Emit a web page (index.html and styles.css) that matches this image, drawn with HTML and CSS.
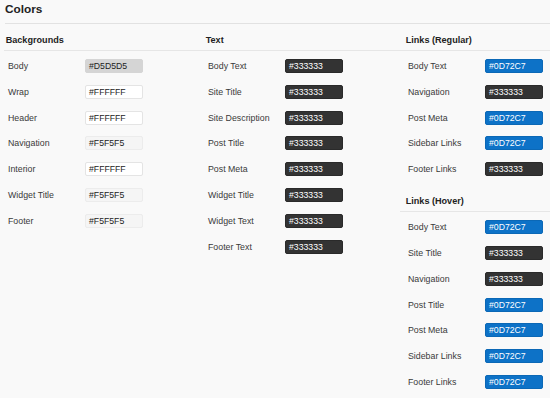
FILE: index.html
```html
<!DOCTYPE html>
<html>
<head>
<meta charset="utf-8">
<link rel="stylesheet" href="styles.css">
</head>
<body>
<div class="page">
  <h1 class="title">Colors</h1>
  <div class="columns">
    <div class="col">
      <h2 class="sec">Backgrounds</h2>
      <div class="rows">
        <div class="row"><span class="label">Body</span><span class="sw sw-d5">#D5D5D5</span></div>
        <div class="row"><span class="label">Wrap</span><span class="sw sw-ff">#FFFFFF</span></div>
        <div class="row"><span class="label">Header</span><span class="sw sw-ff">#FFFFFF</span></div>
        <div class="row"><span class="label">Navigation</span><span class="sw sw-f5">#F5F5F5</span></div>
        <div class="row"><span class="label">Interior</span><span class="sw sw-ff">#FFFFFF</span></div>
        <div class="row"><span class="label">Widget Title</span><span class="sw sw-f5">#F5F5F5</span></div>
        <div class="row"><span class="label">Footer</span><span class="sw sw-f5">#F5F5F5</span></div>
      </div>
    </div>
    <div class="col">
      <h2 class="sec">Text</h2>
      <div class="rows">
        <div class="row"><span class="label">Body Text</span><span class="sw sw-dark">#333333</span></div>
        <div class="row"><span class="label">Site Title</span><span class="sw sw-dark">#333333</span></div>
        <div class="row"><span class="label">Site Description</span><span class="sw sw-dark">#333333</span></div>
        <div class="row"><span class="label">Post Title</span><span class="sw sw-dark">#333333</span></div>
        <div class="row"><span class="label">Post Meta</span><span class="sw sw-dark">#333333</span></div>
        <div class="row"><span class="label">Widget Title</span><span class="sw sw-dark">#333333</span></div>
        <div class="row"><span class="label">Widget Text</span><span class="sw sw-dark">#333333</span></div>
        <div class="row"><span class="label">Footer Text</span><span class="sw sw-dark">#333333</span></div>
      </div>
    </div>
    <div class="col col-last">
      <h2 class="sec">Links (Regular)</h2>
      <div class="rows">
        <div class="row"><span class="label">Body Text</span><span class="sw sw-blue">#0D72C7</span></div>
        <div class="row"><span class="label">Navigation</span><span class="sw sw-dark">#333333</span></div>
        <div class="row"><span class="label">Post Meta</span><span class="sw sw-blue">#0D72C7</span></div>
        <div class="row"><span class="label">Sidebar Links</span><span class="sw sw-blue">#0D72C7</span></div>
        <div class="row"><span class="label">Footer Links</span><span class="sw sw-dark">#333333</span></div>
      </div>
      <h2 class="sec sec-next">Links (Hover)</h2>
      <div class="rows">
        <div class="row"><span class="label">Body Text</span><span class="sw sw-blue">#0D72C7</span></div>
        <div class="row"><span class="label">Site Title</span><span class="sw sw-dark">#333333</span></div>
        <div class="row"><span class="label">Navigation</span><span class="sw sw-dark">#333333</span></div>
        <div class="row"><span class="label">Post Title</span><span class="sw sw-blue">#0D72C7</span></div>
        <div class="row"><span class="label">Post Meta</span><span class="sw sw-blue">#0D72C7</span></div>
        <div class="row"><span class="label">Sidebar Links</span><span class="sw sw-blue">#0D72C7</span></div>
        <div class="row"><span class="label">Footer Links</span><span class="sw sw-blue">#0D72C7</span></div>
      </div>
    </div>
  </div>
</div>
</body>
</html>
```

FILE: styles.css
```css
html, body {
  margin: 0;
  padding: 0;
  background: #f9f9f9;
}
body {
  font-family: "Liberation Sans", Arial, Helvetica, sans-serif;
  color: #333;
}
.page {
  width: 550px;
}
.title {
  margin: 0 0 0 5px;
  font-size: 11.8px;
  font-weight: bold;
  line-height: 18px;
  padding-bottom: 5px;
  color: #222;
  border-bottom: 1px solid #e2e2e2;
}
.columns {
  display: flex;
}
.col {
  width: 200px;
  flex: none;
}
.col:first-child .sec {
  margin-left: 4px;
  padding-left: 1.7px;
}
.col-last {
  width: 150px;
}
.sec {
  margin: 10px 0 0 0;
  padding: 0 0 4px 5.7px;
  font-size: 9.1px;
  font-weight: bold;
  line-height: 12px;
  color: #222;
  border-bottom: 1px solid #e6e6e6;
}
.sec-next {
  margin-top: 13px;
}
.rows {
  padding-top: 2px;
}
.row {
  height: 25.83px;
  display: flex;
  align-items: center;
  padding-left: 8px;
}
.label {
  width: 77px;
  flex: none;
  font-size: 8.8px;
  color: #3a3a3a;
}
.sw {
  box-sizing: border-box;
  width: 58px;
  height: 14px;
  padding-left: 3px;
  border-radius: 2px;
  font-size: 8.7px;
  line-height: 12px;
  border: 1px solid transparent;
  color: #222;
}
.sw-d5 {
  background: #d5d5d5;
  border-color: #d5d5d5;
}
.sw-ff {
  background: #ffffff;
  border-color: #e4e4e4;
}
.sw-f5 {
  background: #f5f5f5;
  border-color: #ececec;
}
.sw-dark {
  background: #333333;
  border-color: #2a2a2a;
  color: #fff;
}
.sw-blue {
  background: #0d72c7;
  border-color: #0b68b6;
  color: #fff;
}
```
